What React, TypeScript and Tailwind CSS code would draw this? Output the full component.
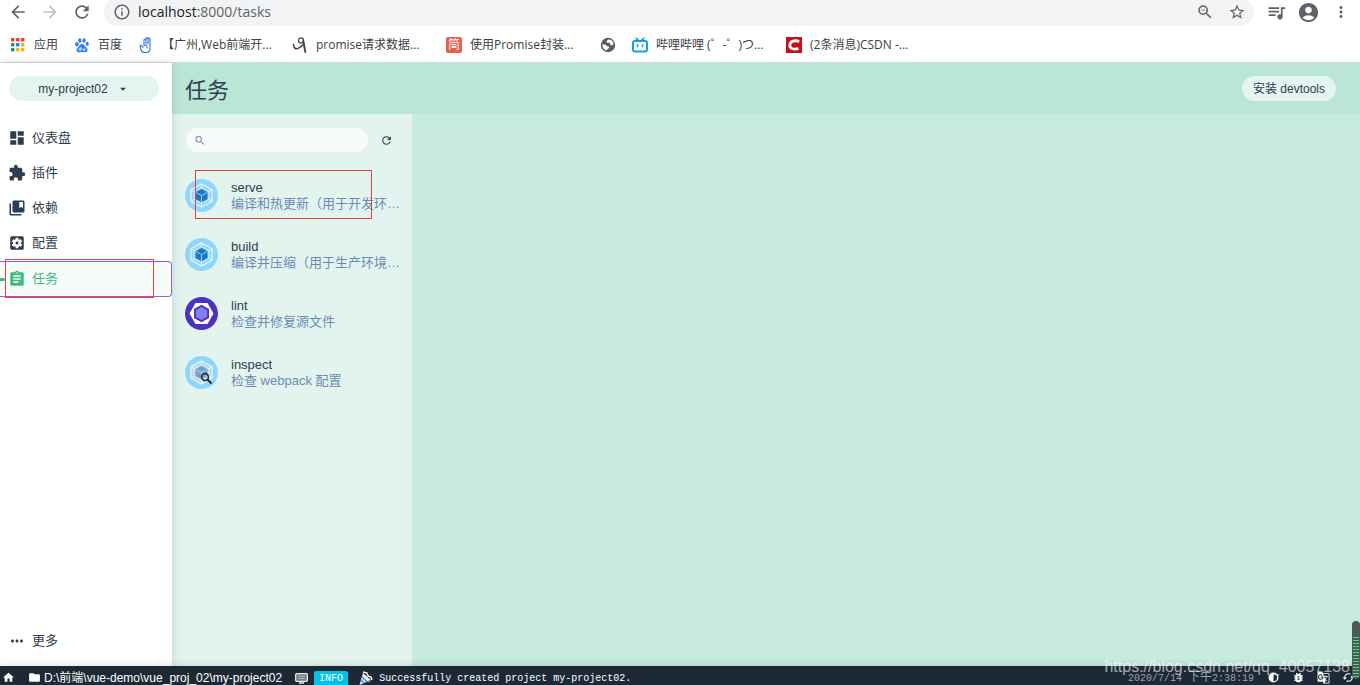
import React from 'react';
import {
  MdAccountCircle,
  MdArrowBack,
  MdArrowDropDown,
  MdArrowForward,
  MdAssignment,
  MdBugReport,
  MdCached,
  MdCollectionsBookmark,
  MdDashboard,
  MdExtension,
  MdFolder,
  MdGTranslate,
  MdHome,
  MdInfoOutline,
  MdMoreHoriz,
  MdMoreVert,
  MdQueueMusic,
  MdRefresh,
  MdSearch,
  MdSettingsApplications,
  MdStarBorder,
  MdZoomOut,
} from 'react-icons/md';

const APP_COLORS = [
  '#f33b30', '#f33b30', '#f33b30',
  '#1e9e58', '#1a85f0', '#fbb404',
  '#1e9e58', '#fbb404', '#fbb404',
];

const AppsIcon = () => (
  <svg width="16" height="16" viewBox="0 0 16 16">
    {APP_COLORS.map((fill, i) => (
      <rect key={i} x={1 + (i % 3) * 5} y={1 + Math.floor(i / 3) * 5} width="3.4" height="3.4" fill={fill} />
    ))}
  </svg>
);

const BaiduIcon = () => (
  <svg width="16" height="16" viewBox="0 0 16 16">
    <g fill="#2f7df6">
      <ellipse cx="2.9" cy="7.2" rx="1.7" ry="2.2" />
      <ellipse cx="5.8" cy="3.5" rx="1.6" ry="2.3" />
      <ellipse cx="10" cy="3.5" rx="1.6" ry="2.3" />
      <ellipse cx="13.2" cy="6.8" rx="1.6" ry="2.1" />
      <path d="M8 6.900c2 0 2.500 1.700 3.600 2.800 1.300 1.200 2.300 2.100 1.900 3.700-.5 1.900-2.300 1.900-5.500 1.600-3 .3-5 .3-5.400-1.600-.3-1.600.8-2.500 1.900-3.700C5.500 8.600 6 6.900 8 6.900z" />
    </g>
    <path d="M7 10v3.200H5.600a.9.9 0 010-1.900H7M9 11.300v1.900h2v-2" fill="none" stroke="#fff" strokeWidth=".8" />
  </svg>
);

const HandIcon = () => (
  <svg width="16" height="16" viewBox="0 0 16 16" fill="none" stroke="#2f6fe4" strokeWidth="1.1" strokeLinecap="round" strokeLinejoin="round">
    <path d="M6 8.500V3a1 1 0 012 0v4M8 7V1.600a1 1 0 012 0V7M10 7V2a1 1 0 012 0v9.500c0 2.500-1.500 4-4 4H6.500c-2 0-3-1-3.500-2.500L2.200 9.500c-.3-1 .8-1.500 1.500-.7L5 10.500" />
    <path d="M6 8.500c2-.8 3.300.2 3.300 2.500" />
  </svg>
);

const ScribbleIcon = () => (
  <svg width="16" height="16" viewBox="0 0 16 16" fill="none" stroke="#4a4543" strokeLinecap="round">
    <circle cx="9" cy="3.4" r="2.500" strokeWidth="1.3" />
    <path d="M11.300 4c.6 3 1.300 7 2 11" strokeWidth="1.9" />
    <path d="M1.500 7.500c.3 3 1.600 4.600 3.700 4.200 2.500-.5 4.500-2.800 6.800-4.500" strokeWidth="1.6" />
  </svg>
);

const GlobeIcon = () => (
  <svg width="16" height="16" viewBox="0 0 16 16">
    <circle cx="8" cy="8" r="7.200" fill="#5a5e63" />
    <path d="M8.500 2.500L6.200 4.600l1 1.200h2.600l.6 2.200 2.300.3.900-2.200c-.5-2-2.500-3.600-5.100-3.600zM2.300 7.300l3.200.4 1.700 1.500 1.500.3.500 1.500-2 1.300-.3 1.300C4.200 13 2.300 10.600 2.300 7.300z" fill="#fff" />
  </svg>
);

const BilibiliIcon = () => (
  <svg width="16" height="16" viewBox="0 0 16 16" fill="none" stroke="#07a3dc" strokeWidth="2" strokeLinecap="round">
    <rect x="1" y="4" width="14" height="10.500" rx="2" />
    <path d="M4.300 1.300l2 2M11.700 1.300l-2 2M5.500 8.200v1.300M10.500 8.200v1.300" strokeWidth="1.7" />
  </svg>
);

const CsdnIcon = () => (
  <svg width="16" height="16" viewBox="0 0 16 16">
    <rect width="16" height="16" fill="#ca0c16" />
    <path d="M13.300 4.300C9 3.200 4.200 3.600 3.800 8c-.3 4.300 4.200 4.500 8.700 3.600" fill="none" stroke="#fff" strokeWidth="2.800" />
  </svg>
);

const JianIcon = () => (
  <span className="flex size-4 items-center justify-center rounded-xs bg-[#e9604a] text-xs leading-none text-white">简</span>
);

const bookmarks = [
  { label: '应用', icon: <AppsIcon />, width: 'w-16' },
  { label: '百度', icon: <BaiduIcon />, width: 'w-16' },
  { label: '【广州,Web前端开...', icon: <HandIcon />, width: 'w-[154px]' },
  { label: 'promise请求数据...', icon: <ScribbleIcon />, width: 'w-[154px]' },
  { label: '使用Promise封装...', icon: <JianIcon />, width: 'w-[154px]' },
  { label: '', icon: <GlobeIcon />, width: 'w-8' },
  { label: '哔哩哔哩 (゜-゜)つ...', icon: <BilibiliIcon />, width: 'w-[154px]' },
  { label: '(2条消息)CSDN -...', icon: <CsdnIcon />, width: 'w-[154px]' },
];

const navItems = [
  { label: '仪表盘', Icon: MdDashboard },
  { label: '插件', Icon: MdExtension },
  { label: '依赖', Icon: MdCollectionsBookmark },
  { label: '配置', Icon: MdSettingsApplications },
];

const WebpackIcon = ({ muted = false }: { muted?: boolean }) => (
  <svg width="33" height="33" viewBox="0 0 33 33" className="shrink-0">
    <circle cx="16.5" cy="16.5" r="16.5" fill="#8ed6fb" />
    <path d="M16.500 5l10.500 5.800v11.400L16.500 28 6 22.200V10.800z" fill={muted ? '#b9d6e6' : '#8ed6fb'} stroke="#e8f6fd" strokeWidth="1.3" />
    <path d="M16.500 8.500l7.500 4v8l-7.500 4.200L9 20.500v-8z" fill="none" stroke="#d3edfa" strokeWidth="1" />
    <path d="M16.500 5v4M16.500 24v4M6 10.800l4 2.200M27 10.800L23 13M6 22.200l4-2.200M27 22.200L23 20" stroke="#e8f6fd" strokeWidth="1" />
    <path d="M16.500 10l6 3.300v6.700l-6 3.300-6-3.300v-6.700z" fill={muted ? '#789fc5' : '#1c78c0'} />
    <path d="M10.500 13.300l6 3.300 6-3.300M16.500 16.600v6.700" fill="none" stroke={muted ? '#b9d6e6' : '#a7dbf7'} strokeWidth=".9" />
    {muted && (
      <g fill="none" stroke="#1d2935">
        <circle cx="20" cy="21" r="3.4" strokeWidth="1.5" />
        <path d="M22.500 23.500l4 4" strokeWidth="2" />
      </g>
    )}
  </svg>
);

const EslintIcon = () => (
  <svg width="33" height="33" viewBox="0 0 33 33" className="shrink-0">
    <circle cx="16.5" cy="16.5" r="16.5" fill="#4b32c3" />
    <path d="M10.500 6h12l6 10.500-6 10.500h-12l-6-10.500z" fill="#fff" />
    <path d="M16.500 7.800l7.500 4.300v8.800l-7.500 4.300L9 20.900v-8.800z" fill="#4b32c3" />
    <path d="M16.500 10l5.600 3.200v6.600l-5.600 3.200-5.600-3.200v-6.600z" fill="#8080f2" />
  </svg>
);

const tasks = [
  { name: 'serve', description: '编译和热更新（用于开发环…', icon: <WebpackIcon />, marked: true },
  { name: 'build', description: '编译并压缩（用于生产环境…', icon: <WebpackIcon /> },
  { name: 'lint', description: '检查并修复源文件', icon: <EslintIcon /> },
  { name: 'inspect', description: '检查 webpack 配置', icon: <WebpackIcon muted /> },
];

const PartyIcon = () => (
  <svg width="15" height="15" viewBox="0 0 15 15" className="shrink-0">
    <path d="M5 2l8 7-11.500 5z" fill="#e6edf2" />
    <path d="M4 6l5 5M3 9l3 3.500" stroke="#3c88c9" strokeWidth="1.3" />
    <path d="M5 1l4 1 1 3 3 1 1 3" fill="none" stroke="#fff" strokeWidth="1.4" />
    <path d="M10 9.500l2 1.500" stroke="#e9a15b" strokeWidth="1.2" />
  </svg>
);

const MonitorIcon = () => (
  <svg width="13" height="11" viewBox="0 0 13 11" className="shrink-0">
    <rect x=".7" y=".7" width="11.6" height="7.6" rx=".8" fill="#70777f" stroke="#e8eaec" strokeWidth="1.3" />
    <path d="M3 3.200h7M3 5.600h7" stroke="#b9bec3" />
    <path d="M4 10h5" stroke="#e8eaec" strokeWidth="1.5" />
  </svg>
);

const ContrastIcon = () => (
  <svg width="13" height="13" viewBox="0 0 13 13">
    <circle cx="6.5" cy="6.5" r="4.3" fill="none" stroke="#fff" strokeWidth="1.3" />
    <path d="M6.500 2.200a4.300 4.300 0 000 8.600z" fill="#fff" />
  </svg>
);

const BrowserBar = () => (
  <div className="shrink-0 border-b border-[#d5d9dc] bg-white text-[#5f6368]">
    <div className="flex h-[26px] items-end overflow-hidden pr-2.5">
      <div className="flex h-7 w-[104px] shrink-0 items-center gap-3 pl-2">
        <button aria-label="Back"><MdArrowBack size={20} /></button>
        <button aria-label="Forward" className="text-[#bdc1c6]"><MdArrowForward size={20} /></button>
        <button aria-label="Reload"><MdRefresh size={20} /></button>
      </div>
      <div className="flex h-7 grow items-center rounded-full bg-[#f1f3f4] pr-2 pl-[9px]">
        <MdInfoOutline size={18} />
        <div className="grow pl-[7px] text-sm">
          <span className="text-[#202124]">localhost</span>:8000/tasks
        </div>
        <button aria-label="Zoom" className="mr-[14px]"><MdZoomOut size={18} /></button>
        <button aria-label="Bookmark this page"><MdStarBorder size={18} /></button>
      </div>
      <div className="flex h-7 shrink-0 items-center gap-2.5 pl-3">
        <button aria-label="Media"><MdQueueMusic size={21} /></button>
        <button aria-label="Profile"><MdAccountCircle size={23} /></button>
        <button aria-label="Menu" className="pl-0.5"><MdMoreVert size={18} /></button>
      </div>
    </div>
    <div className="flex h-9 items-center overflow-hidden pt-px pl-2.5 text-xs text-[#3c4043]">
      {bookmarks.map(({ label, icon, width }) => (
        <a key={label} href="#" aria-label={label || 'Bookmark'} className={`flex shrink-0 items-center gap-2 whitespace-nowrap ${width}`}>
          {icon}
          {label}
        </a>
      ))}
    </div>
  </div>
);

const Sidebar = () => (
  <aside className="relative z-10 flex w-[172px] shrink-0 flex-col bg-white shadow-[0_0_10px_rgba(0,0,0,0.15)]">
    <div className="px-[9px] pt-[13px] pb-[19px]">
      <button className="flex h-[25px] w-[150px] items-center justify-center gap-2 rounded-full bg-[#e3f5ee] text-xs">
        my-project02
        <MdArrowDropDown size={14} />
      </button>
    </div>
    <nav className="text-[13px]">
      {navItems.map(({ label, Icon }) => (
        <a key={label} href="#" className="flex h-[35px] items-center gap-1.5 pl-2">
          <Icon size={18} />
          {label}
        </a>
      ))}
      <a href="#" className="relative mt-px flex h-9 items-center gap-1.5 rounded-r-sm border border-l-0 border-[#9b59d6] bg-[#f6fcf9] pl-2 text-[#42b983]">
        <MdAssignment size={18} />
        任务
        <span className="absolute left-0 h-[3px] w-[5px] rounded-r-full bg-[#42b983]" />
        <span className="absolute -top-[3px] -bottom-[2px] left-[5px] w-[149px] border border-[#f33b3b]" />
      </a>
    </nav>
    <a href="#" className="mt-auto mb-2 flex h-[35px] items-center gap-1.5 pl-2 text-[13px]">
      <MdMoreHoriz size={18} />
      更多
    </a>
  </aside>
);

const TaskList = () => (
  <section className="w-60 shrink-0 bg-[#e3f4ee]">
    <div className="flex items-center gap-3 pt-3.5 pl-3.5">
      <label className="flex h-6 w-[182px] items-center rounded-full bg-[#f7fcfa] px-2">
        <MdSearch size={13} className="text-[#6b8bb0]" />
        <input aria-label="搜索" className="ml-1 w-full min-w-0 bg-transparent text-xs outline-none" />
      </label>
      <button aria-label="刷新"><MdRefresh size={13} /></button>
    </div>
    <ul className="pt-3.5">
      {tasks.map(({ name, description, icon, marked }) => (
        <li key={name} className="relative flex h-[59px] items-center gap-[13px] pl-[13px]">
          {icon}
          <div className="min-w-0 text-[13px] leading-4">
            <div>{name}</div>
            <div className="whitespace-nowrap text-[#6b8bb5]">{description}</div>
          </div>
          {marked && <span className="absolute top-1 left-[23px] h-[49px] w-[177px] border border-[#f33b3b]" />}
        </li>
      ))}
    </ul>
  </section>
);

const StatusBar = () => (
  <footer className="relative z-20 flex h-[19px] shrink-0 items-center overflow-hidden bg-[#1d2935] pt-1 text-xs whitespace-nowrap text-white shadow-[0_0_10px_rgba(0,0,0,0.15)]">
    <button aria-label="主页" className="w-7 pl-0.5"><MdHome size={13} /></button>
    <button className="flex items-center gap-[3px]">
      <MdFolder size={13} />
      D:\前端\vue-demo\vue_proj_02\my-project02
    </button>
    <button className="ml-[13px] flex items-center pt-0.5 font-['Liberation_Mono','Noto_Sans_CJK_SC',monospace] text-[10px]">
      <MonitorIcon />
      <span className="mr-[10px] ml-1.5 rounded-xs bg-[#03c2e6] px-[5px] leading-[16px]">INFO</span>
      <PartyIcon />
      <span className="ml-1.5">Successfully created project my-project02.</span>
    </button>
    <div className="ml-auto flex items-center gap-3 pr-[5px]">
      <span className="mr-px pt-0.5 font-['Liberation_Mono','Noto_Sans_CJK_SC',monospace] text-[10px] leading-3 text-[#9ba2a8]">
        2020/7/14 <span className="text-xs leading-none">下午</span>2:38:19
      </span>
      <button aria-label="主题"><ContrastIcon /></button>
      <button aria-label="报告"><MdBugReport size={13} /></button>
      <button aria-label="翻译"><MdGTranslate size={13} /></button>
      <button aria-label="重置"><MdCached size={13} /></button>
    </div>
  </footer>
);

// Small level meter hanging over the right edge
const Meter = () => (
  <svg width="8" height="58" viewBox="0 0 8 58" className="absolute right-0 bottom-1.5 z-40">
    <rect width="8" height="58" rx="4" fill="#4a5a54" />
    {Array.from({ length: 14 }, (_, i) => (
      <rect key={i} x="1" y={16 + i * 3} width="6" height="1" fill="#3ddc74" />
    ))}
  </svg>
);

export default function App() {
  return (
    <div className="relative flex h-screen flex-col overflow-hidden font-['Liberation_Sans','Noto_Sans_CJK_SC',sans-serif] text-[#2c3e50]">
      <div className="shrink-0 font-['Open_Sans','Noto_Sans_CJK_SC',sans-serif]">
        <BrowserBar />
      </div>
      <div className="flex min-h-0 grow">
        <Sidebar />
        <main className="flex min-w-0 grow flex-col bg-[#c7ebdf]">
          <header className="flex h-[51px] shrink-0 items-center justify-between bg-[#bbe6d6] pr-6 pl-[13px]">
            <h1 className="pt-1 text-[22px] leading-none">任务</h1>
            <button className="h-[25px] rounded-full bg-[#e3f5ee] px-[11px] text-xs">安装 devtools</button>
          </header>
          <div className="flex min-h-0 grow">
            <TaskList />
          </div>
        </main>
      </div>
      <StatusBar />
      <p className="absolute right-[10px] bottom-1.5 z-30 text-base leading-6 text-white/60">https://blog.csdn.net/qq_40057138</p>
      <Meter />
    </div>
  );
}
